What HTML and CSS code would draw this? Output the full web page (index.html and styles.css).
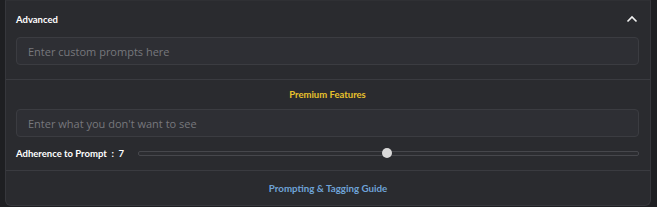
FILE: index.html
```html
<!DOCTYPE html>
<html lang="en">
<head>
  <meta charset="UTF-8">
  <title>Advanced</title>
  <link rel="stylesheet" href="styles.css">
</head>
<body>

  <div class="panel">
    <div class="section">
      <div class="panel-header">
        <span class="panel-title">Advanced</span>
        <svg class="chevron" width="12" height="8" viewBox="0 0 12 8">
          <path d="M1.5 6.5 L6 2 L10.5 6.5" fill="none" stroke="#f2f2f2" stroke-width="1.6"/>
        </svg>
      </div>
      <input class="text-input" type="text" placeholder="Enter custom prompts here">
    </div>

    <div class="section premium">
      <div class="premium-title">Premium Features</div>
      <input class="text-input" type="text" placeholder="Enter what you don't want to see">
      <div class="slider-row">
        <span class="slider-label">Adherence to Prompt &nbsp;:&nbsp; 7</span>
        <div class="slider-track">
          <div class="slider-thumb" style="left: 49.7%"></div>
        </div>
      </div>
    </div>

    <div class="panel-footer">
      <a class="guide-link" href="#">Prompting &amp; Tagging Guide</a>
    </div>
  </div>

</body>
</html>
```

FILE: styles.css
```css
body {
  margin: 0;
  background: #1e1f22;
  font-family: "Open Sans", "Noto Sans", sans-serif;
  color: #e8e8e8;
}
.panel {
  margin-left: 5px;
  width: 644px;
  height: 204px;
  background: #2a2b2f;
  border: 1px solid #36373c;
  border-top-color: #2f3034;
  border-radius: 0 0 6px 6px;
  display: flex;
  flex-direction: column;
}
.section {
  padding: 0 11px 14px 10px;
  border-bottom: 1px solid #3a3b40;
}
.panel-header {
  height: 36px;
  display: flex;
  align-items: center;
  justify-content: space-between;
}
.panel-title {
  font-family: Lato, "Open Sans", sans-serif;
  font-size: 9.5px;
  font-weight: 700;
  color: #ffffff;
}
.chevron {
  margin-right: 1px;
  margin-top: -1px;
}
.text-input {
  display: block;
  box-sizing: border-box;
  width: 100%;
  height: 28px;
  padding: 0 11px;
  background: #2e2f34;
  border: 1px solid #3b3c41;
  border-radius: 4px;
  font-family: inherit;
  font-size: 11px;
  color: #ddd;
  outline: none;
}
.text-input::placeholder {
  color: #77787d;
}
.premium {
  padding-top: 7px;
  padding-bottom: 9px;
}
.premium-title {
  text-align: center;
  font-family: Lato, "Open Sans", sans-serif;
  font-size: 9.5px;
  font-weight: 700;
  color: #e8c22c;
  line-height: 16px;
  margin-bottom: 6px;
}
.slider-row {
  display: flex;
  align-items: center;
  height: 16px;
  margin-top: 8px;
}
.slider-label {
  font-family: Lato, "Open Sans", sans-serif;
  font-size: 9.5px;
  font-weight: 700;
  color: #ffffff;
  white-space: nowrap;
  margin-right: 14px;
}
.slider-track {
  position: relative;
  flex: 1;
  height: 3px;
  background: #2c2d31;
  border: 1px solid #46474c;
  border-radius: 2px;
}
.slider-thumb {
  position: absolute;
  top: 50%;
  width: 10px;
  height: 10px;
  margin: -5px 0 0 -5px;
  border-radius: 50%;
  background: #d9d9d9;
}
.panel-footer {
  flex: 1;
  display: flex;
  align-items: center;
  justify-content: center;
}
.guide-link {
  font-family: Lato, "Open Sans", sans-serif;
  font-size: 9.75px;
  font-weight: 700;
  color: #6fa3d8;
  text-decoration: none;
}
```
